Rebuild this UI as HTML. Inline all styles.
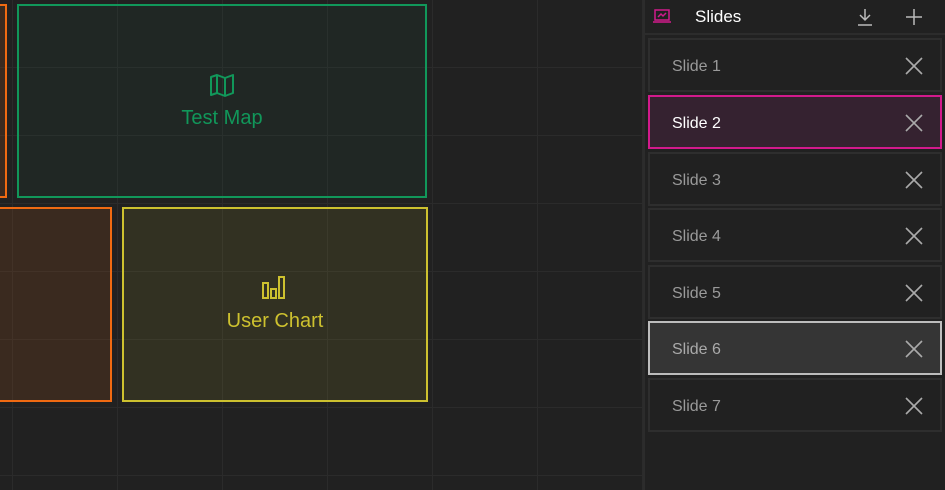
<!DOCTYPE html>
<html><head><style>
body{margin:0;width:945px;height:490px;overflow:hidden;background:#212121;font-family:"Liberation Sans",sans-serif;position:relative}
.grid{position:absolute;left:0;top:0;width:643px;height:490px;
background-image:linear-gradient(to right,#2b2b2b 1px,transparent 1px),linear-gradient(to bottom,#2b2b2b 1px,transparent 1px);
background-size:105px 68px;background-position:12px 67px}
.box{position:absolute;box-sizing:border-box;border:2px solid;display:flex;flex-direction:column;align-items:center;justify-content:center;font-size:20px}
.side{position:absolute;left:643px;top:0;width:302px;height:490px;background:#212121;border-left:2px solid #2c2c2c;box-sizing:border-box}
.hdr{height:33px;border-bottom:2px solid #2c2c2c;position:relative}
.item{position:absolute;left:3px;width:294px;height:54px;box-sizing:border-box;border:2px solid #2e2e2e;color:#9a9a9a;font-size:16px}
.item span{position:absolute;left:22px;top:18px}
.item svg{position:absolute;right:17px;top:17px}
</style></head><body>
<div class="grid"></div>
<div class="box" style="left:-10px;top:4px;width:17px;height:194px;border-color:#f06a12;background:rgba(240,106,18,0.12)"></div>
<div class="box" style="left:17px;top:4px;width:410px;height:194px;border-color:#11975a;background:rgba(17,151,90,0.05);color:#11975a">
<svg width="26" height="24" viewBox="0 0 26 24" fill="none" stroke="#11975a" stroke-width="2" stroke-linejoin="round"><path d="M2 4 L8 2 L16 5 L24 2 L24 20 L16 23 L8 20 L2 22 Z M8 2 V20 M16 5 V23"/></svg>
<div style="margin-top:10px">Test Map</div></div>
<div class="box" style="left:-10px;top:207px;width:122px;height:195px;border-color:#f06a12;background:rgba(240,106,18,0.12)"></div>
<div class="box" style="left:122px;top:207px;width:306px;height:195px;border-color:#cdc12f;background:rgba(205,193,47,0.1);color:#cdc12f">
<svg width="26" height="24" viewBox="0 0 26 24" fill="none" stroke="#cdc12f" stroke-width="2"><rect x="1" y="7" width="5" height="15"/><rect x="9" y="13" width="5" height="9"/><rect x="17" y="1" width="5" height="21"/></svg>
<div style="margin-top:10px">User Chart</div></div>
<div class="side">
<div class="hdr">
<svg style="position:absolute;left:8px;top:9px" width="18" height="15" viewBox="0 0 18 15" fill="none" stroke="#d21a8c" stroke-width="1.5"><rect x="2" y="1" width="14" height="10"/><path d="M0 13 H18 M5 8 L8 5 L10 7 L13 4"/></svg>
<span style="position:absolute;left:50px;top:7px;color:#fff;font-size:17px">Slides</span>
<svg style="position:absolute;left:212px;top:8px" width="16" height="18" viewBox="0 0 16 18" fill="none" stroke="#bbb" stroke-width="1.5"><path d="M8 1 V12 M3 7 L8 12 L13 7 M1 17 H15"/></svg>
<svg style="position:absolute;left:261px;top:9px" width="16" height="16" viewBox="0 0 16 16" fill="none" stroke="#bbb" stroke-width="1.5"><path d="M8 0 V16 M0 8 H16"/></svg>
</div>
<div class="item" style="top:38px"><span>Slide 1</span><svg width="18" height="18" viewBox="0 0 18 18" stroke="#aaa" stroke-width="1.6"><path d="M1 1 L17 17 M17 1 L1 17"/></svg></div>
<div class="item" style="top:95px;border-color:#d21a8c;background:#352230;color:#fff"><span>Slide 2</span><svg width="18" height="18" viewBox="0 0 18 18" stroke="#aaa" stroke-width="1.6"><path d="M1 1 L17 17 M17 1 L1 17"/></svg></div>
<div class="item" style="top:152px"><span>Slide 3</span><svg width="18" height="18" viewBox="0 0 18 18" stroke="#aaa" stroke-width="1.6"><path d="M1 1 L17 17 M17 1 L1 17"/></svg></div>
<div class="item" style="top:208px"><span>Slide 4</span><svg width="18" height="18" viewBox="0 0 18 18" stroke="#aaa" stroke-width="1.6"><path d="M1 1 L17 17 M17 1 L1 17"/></svg></div>
<div class="item" style="top:265px"><span>Slide 5</span><svg width="18" height="18" viewBox="0 0 18 18" stroke="#aaa" stroke-width="1.6"><path d="M1 1 L17 17 M17 1 L1 17"/></svg></div>
<div class="item" style="top:321px;border-color:#bdbdbd;background:#353535;color:#aaa"><span>Slide 6</span><svg width="18" height="18" viewBox="0 0 18 18" stroke="#aaa" stroke-width="1.6"><path d="M1 1 L17 17 M17 1 L1 17"/></svg></div>
<div class="item" style="top:378px"><span>Slide 7</span><svg width="18" height="18" viewBox="0 0 18 18" stroke="#aaa" stroke-width="1.6"><path d="M1 1 L17 17 M17 1 L1 17"/></svg></div>
</div>
</body></html>
